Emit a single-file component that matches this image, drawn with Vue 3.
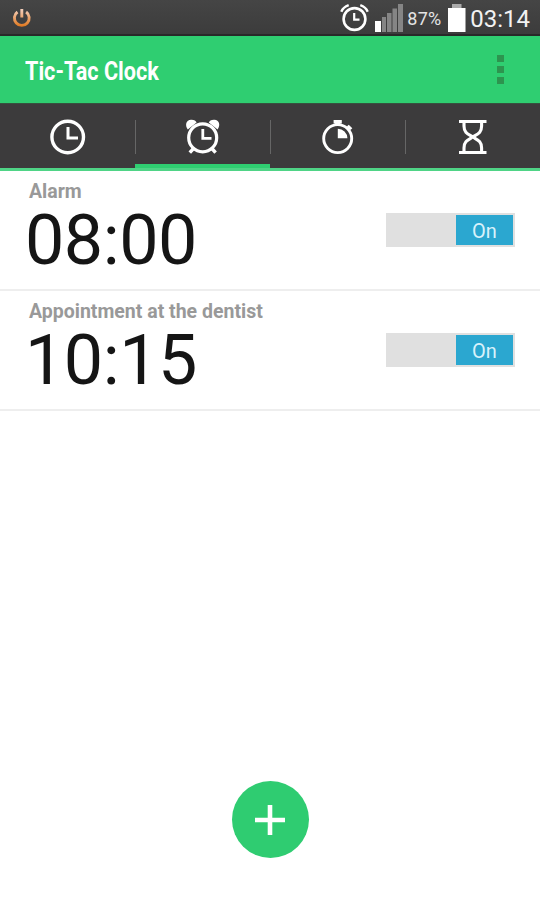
<script setup>
import { ref } from 'vue';

const tabs = ['clock', 'alarm', 'stopwatch', 'timer'];
const activeTab = ref('alarm');

const alarms = ref([
  { id: 1, label: 'Alarm', time: '08:00', enabled: true },
  { id: 2, label: 'Appointment at the dentist', time: '10:15', enabled: true }
]);

const toggleAlarm = (alarm) => {
  alarm.enabled = !alarm.enabled;
};
</script>

<template>
  <div class="screen">
    <!-- Status bar -->
    <div class="status-bar">
      <svg class="power" width="20" height="20" viewBox="0 0 20 20">
        <defs>
          <linearGradient id="powerFill" x1="0" y1="0" x2="0" y2="20" gradientUnits="userSpaceOnUse">
            <stop offset="0.1" stop-color="#f3cdb8" />
            <stop offset="0.9" stop-color="#e07a22" />
          </linearGradient>
        </defs>
        <path d="M5.5 4 A7.4 7.4 0 1 0 14.1 4 M9.8 1 V9.6" fill="none" stroke="url(#powerFill)" stroke-width="2.9" />
      </svg>
      <div class="status-icons">
        <svg class="status-alarm" width="30" height="30" viewBox="0 0 30 30" fill="none" stroke="#fff">
          <circle cx="14.5" cy="16" r="10.9" stroke-width="2.6" />
          <path d="M14.2 10 V16.7 H19.5" stroke-width="2.2" />
          <path d="M1.3 8.7 Q3.2 4.2 8.7 2.2 M20.3 2.2 Q25.8 4.2 27.7 8.7" stroke-width="2.4" />
        </svg>
        <svg class="signal" width="29" height="28" viewBox="0 0 29 28">
          <rect x="0" y="17" width="6" height="11" fill="#fff" />
          <g fill="#858585">
            <rect x="7" y="13" width="4" height="15" />
            <rect x="12" y="9" width="4.5" height="19" />
            <rect x="17.5" y="4.5" width="4.5" height="23.5" />
            <rect x="23" y="0" width="5" height="28" />
          </g>
        </svg>
        <span class="percent">87%</span>
        <svg class="battery" width="18" height="28" viewBox="0 0 18 28">
          <rect x="4" y="0" width="9.5" height="5" fill="#aaa" />
          <rect x="0" y="4" width="17.5" height="24" fill="#fff" />
        </svg>
        <span class="system-time">03:14</span>
      </div>
    </div>

    <!-- App bar -->
    <header class="app-bar">
      <h1 class="title">Tic-Tac Clock</h1>
      <button class="menu">
        <span></span>
        <span></span>
        <span></span>
      </button>
    </header>

    <!-- Tabs -->
    <nav class="tabs">
      <button
        v-for="tab in tabs"
        :key="tab"
        class="tab"
        :class="{ active: activeTab === tab }"
        @click="activeTab = tab"
      >
        <svg width="40" height="40" viewBox="0 0 40 40" fill="none" stroke="#fff">
          <template v-if="tab === 'clock'">
            <circle cx="19.7" cy="20" r="15.8" stroke-width="3.4" />
            <path d="M20 10 V21 H30" stroke-width="3" />
          </template>
          <template v-else-if="tab === 'alarm'">
            <circle cx="19.7" cy="20.8" r="14" stroke-width="3.2" />
            <path d="M19.8 12 V21.3 H28.5" stroke-width="2.8" />
            <path d="M10.5 31.5 L6.8 35.6 M28.9 31.5 L32.6 35.6" stroke-width="3.4" />
            <path
              d="M4.8 12.6 C1.6 8 3.2 3.2 8 2.8 C11 2.6 13 4 13.6 5.6 Z M34.6 12.6 C37.8 8 36.2 3.2 31.4 2.8 C28.4 2.6 26.4 4 25.8 5.6 Z"
              fill="#fff"
              stroke="none"
            />
          </template>
          <template v-else-if="tab === 'stopwatch'">
            <circle cx="19.7" cy="21.6" r="14" stroke-width="2.9" />
            <path d="M15.6 3 H23.8 V6.4 H22.3 V9 H17.1 V6.4 H15.6 Z M19.8 11.8 A9.6 9.6 0 0 1 29.4 21.2 H19.8 Z" fill="#fff" stroke="none" />
            <path d="M29.3 12.3 L31.8 9.8 M29.8 8.6 L33.4 12.2" stroke-width="2.6" />
          </template>
          <template v-else>
            <path d="M6 4.5 H33.5 M6 35.5 H33.5" stroke-width="3.2" />
            <path
              d="M11 5 V9 C11 16 15 17 19.8 20 C24.6 17 28.6 16 28.6 9 V5 M11 35 V31 C11 24 15 23 19.8 20 C24.6 23 28.6 24 28.6 31 V35"
              stroke-width="3.1"
            />
          </template>
        </svg>
      </button>
    </nav>

    <!-- Alarm list -->
    <ul class="alarm-list">
      <li v-for="alarm in alarms" :key="alarm.id" class="alarm">
        <div class="alarm-info">
          <span class="alarm-label">{{ alarm.label }}</span>
          <span class="alarm-time">{{ alarm.time }}</span>
        </div>
        <button class="switch" :class="{ on: alarm.enabled }" @click="toggleAlarm(alarm)">
          <span class="thumb">{{ alarm.enabled ? 'On' : 'Off' }}</span>
        </button>
      </li>
    </ul>

    <footer class="footer">
      <button class="add">
        <svg width="30" height="30" viewBox="0 0 30 30">
          <path d="M15 0 V30 M0 15 H30" stroke="#fff" stroke-width="4.6" />
        </svg>
      </button>
    </footer>
  </div>
</template>

<style>
body {
  margin: 0;
}
</style>

<style scoped>
.screen {
  display: flex;
  flex-direction: column;
  width: 540px;
  height: 900px;
  background: #fff;
  font-family: Roboto, sans-serif;
  overflow: hidden;
}

button {
  border: none;
  padding: 0;
  background: none;
  font-family: inherit;
  cursor: pointer;
}

svg {
  display: block;
  flex: none;
}

/* Status bar */
.status-bar {
  display: flex;
  justify-content: space-between;
  box-sizing: border-box;
  height: 36px;
  padding: 0 10px 0 12px;
  background: linear-gradient(#454545, #3c3c3c);
  border-bottom: 2px solid #292929;
}

.power {
  margin-top: 8px;
}

.status-icons {
  display: flex;
  align-items: flex-start;
}

.status-alarm {
  margin-top: 3px;
}

.signal {
  margin: 4px 3px 0 5px;
}

.percent {
  width: 35px;
  margin: 8px 6px 0 0;
  font-size: 18px;
  line-height: 21px;
  letter-spacing: 0.3px;
  color: #e4e4e4;
  white-space: nowrap;
}

.battery {
  margin: 4px 4px 0 0;
}

.system-time {
  margin-top: 4px;
  font-size: 24px;
  line-height: 30px;
  color: #f2f2f2;
}

/* App bar */
.app-bar {
  display: flex;
  align-items: center;
  justify-content: space-between;
  height: 67px;
  padding: 0 36px 0 25px;
  background: #2fce71;
}

.title {
  margin: 4px 0 0;
  font-size: 25px;
  line-height: 30px;
  font-weight: 700;
  color: #fff;
  transform: scaleX(0.865);
  transform-origin: left;
}

.menu {
  display: flex;
  flex-direction: column;
  gap: 4px;
}

.menu span {
  width: 7px;
  height: 7px;
  background: #2d944f;
}

/* Tabs */
.tabs {
  display: flex;
  box-sizing: border-box;
  height: 68px;
  background: #3c3b3c;
  border-top: 1px solid #36523f;
  border-bottom: 3px solid #4fd486;
}

.tab {
  display: flex;
  justify-content: center;
  box-sizing: border-box;
  width: 135px;
  padding-top: 13px;
}

.tab + .tab {
  background: linear-gradient(#666, #666) left 16px / 1px 34px no-repeat;
}

.tab.active {
  border-bottom: 4px solid #2fce71;
}

/* Alarm list */
.alarm-list {
  margin: 0;
  padding: 0;
  list-style: none;
}

.alarm {
  display: flex;
  justify-content: space-between;
  box-sizing: border-box;
  height: 120px;
  padding: 9px 25px 0;
  border-bottom: 2px solid #eee;
}

.alarm-info {
  display: flex;
  flex-direction: column;
}

.alarm-label {
  margin-left: 4px;
  font-size: 19.5px;
  line-height: 24px;
  font-weight: 700;
  color: #999;
}

.alarm-time {
  margin-top: 2px;
  font-size: 70px;
  line-height: 68px;
  letter-spacing: -0.5px;
  color: #151515;
}

.switch {
  display: flex;
  box-sizing: border-box;
  width: 129px;
  height: 34px;
  margin-top: 33px;
  padding: 2px;
  background: #e0e0e0;
}

.switch.on {
  justify-content: flex-end;
}

.thumb {
  width: 57px;
  height: 30px;
  font-size: 20px;
  line-height: 32px;
  text-align: center;
  color: #fff;
  background: #999;
}

.switch.on .thumb {
  color: #d9f2fb;
  background: #2ba7d0;
}

/* Add button */
.footer {
  display: flex;
  justify-content: center;
  margin-top: auto;
  padding-bottom: 42px;
}

.add {
  display: flex;
  align-items: center;
  justify-content: center;
  width: 77px;
  height: 77px;
  border-radius: 50%;
  background: #2fcc71;
}
</style>
